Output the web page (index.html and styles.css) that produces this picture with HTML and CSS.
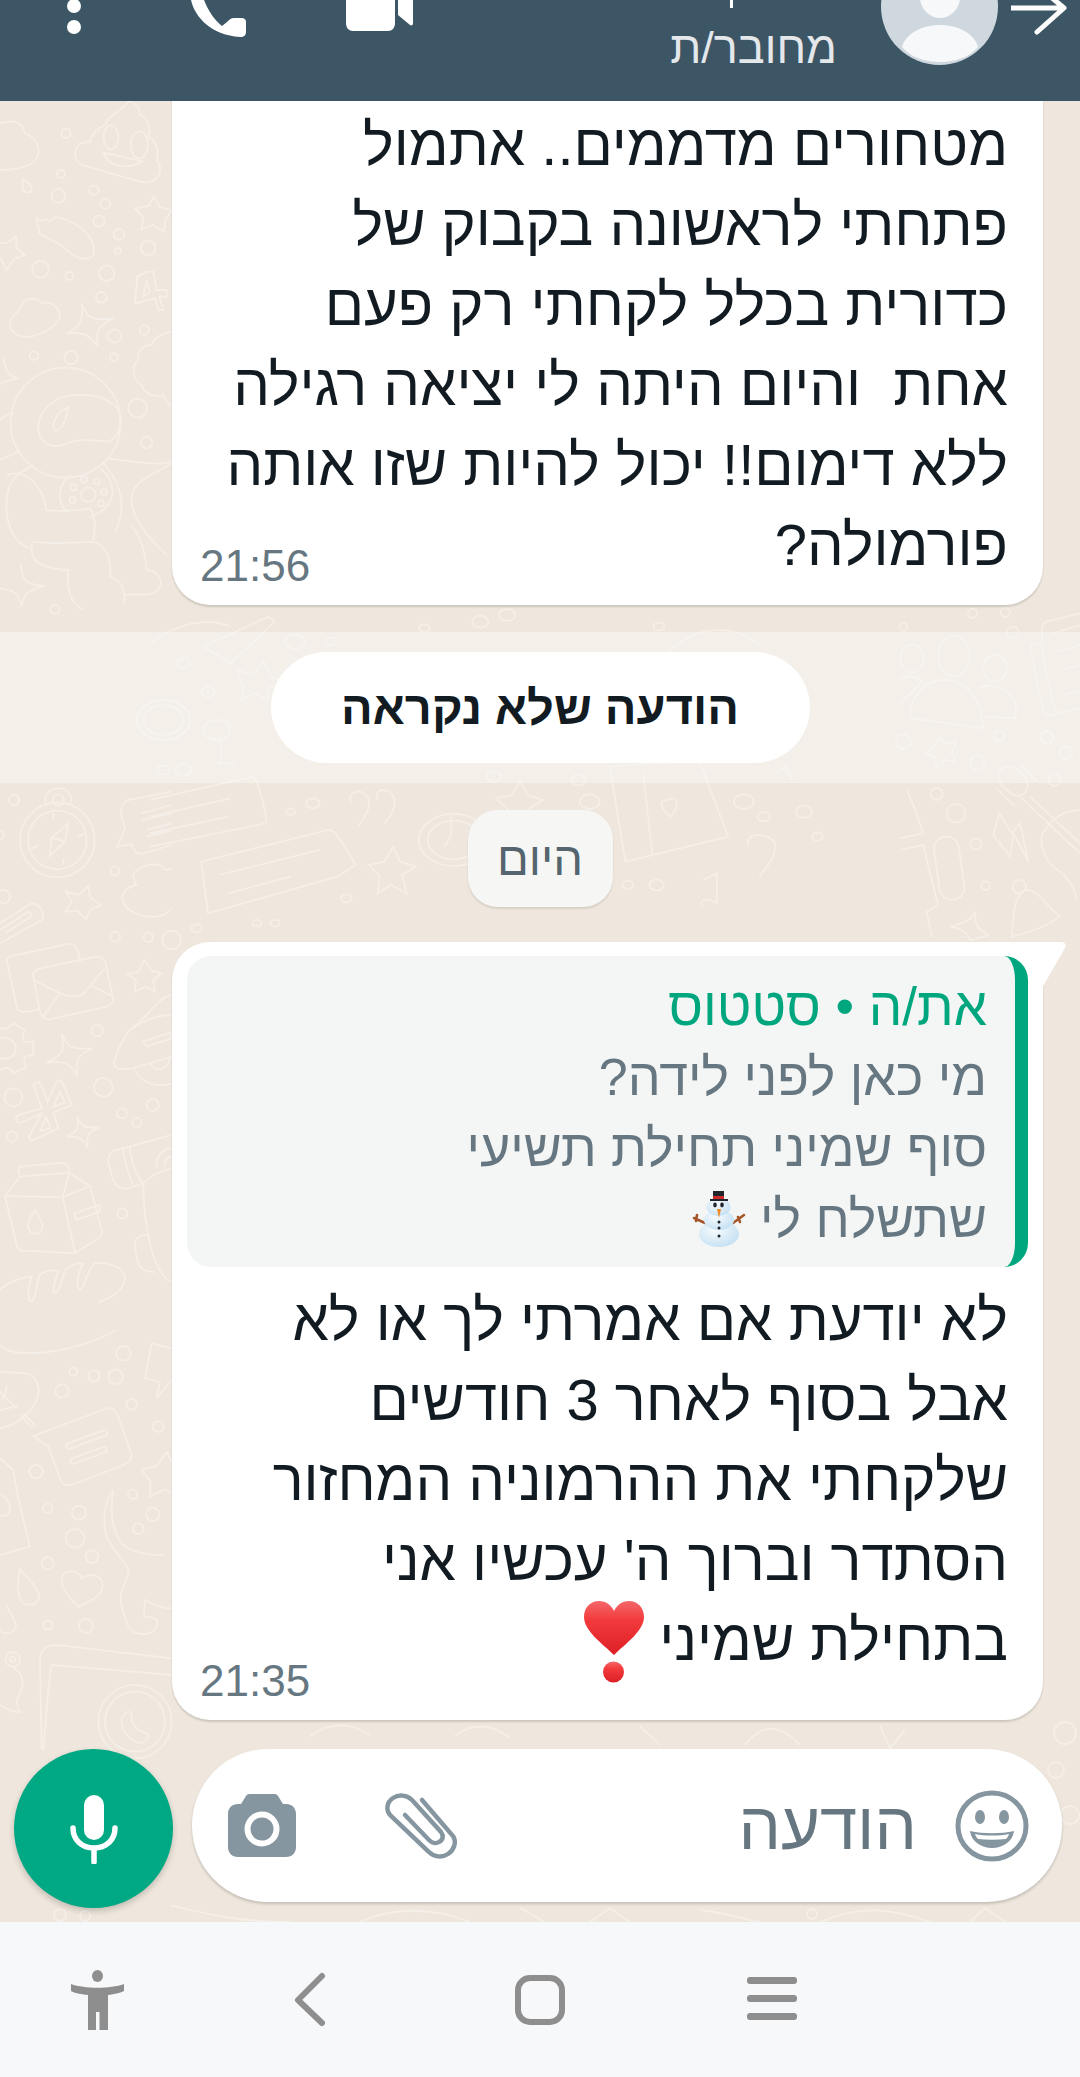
FILE: index.html
```html
<!DOCTYPE html>
<html lang="he">
<head>
  <meta charset="utf-8">
  <title>צ'אט</title>
  <link rel="stylesheet" href="styles.css">
</head>
<body>
  <header class="topbar">
    <svg class="ic-more" viewBox="67 0 14 34"><circle cx="74" cy="6" r="7"/><circle cx="74" cy="27" r="7"/></svg>
    <svg class="ic-phone" viewBox="191 0 55 37"><path d="M191 0C195 18 212 35 240 37C244 37 246 35 246 32V22C246 19 244 18 241 18H234C231 18 229 20 227 22L222 26C214 20 208 10 204 0Z"/></svg>
    <svg class="ic-video" viewBox="346 0 67 31"><path d="M346 0V23C346 28 349 31 353 31H388C392 31 395 28 395 23V0Z"/><path d="M398 0V15L410 25C412 26 413 25 413 23V0Z"/></svg>
    <div class="contact">
      <span class="contact-name"></span>
      <span class="contact-status" dir="rtl">מחובר/ת</span>
    </div>
    <svg class="avatar" viewBox="881 0 117 66">
      <circle cx="939.5" cy="6.5" r="58.5" fill="#cfd8df"/>
      <ellipse cx="940" cy="-3" rx="20" ry="21" fill="#f6f8f9"/>
      <path d="M902 47C905 35 920 25 940 25C960 25 975 35 978 47C970 57 955 62 940 62C925 62 910 57 902 47Z" fill="#f6f8f9"/>
    </svg>
    <svg class="ic-back" viewBox="1011 0 56 35"><path d="M1011 8H1063M1064 8L1037 32M1064 8L1045 -8"/></svg>
  </header>

  <main class="chat">
    <svg class="doodles" viewBox="0 101 1080 1821">
      <g transform="translate(0 100) scale(.3333)">
        <path d="M0 70C40 55 70 70 75 100C110 110 125 150 110 175C90 205 40 210 0 210"/>
        <path d="M240 130C220 150 220 180 245 195L420 245C470 255 495 215 470 180C480 150 465 120 445 110C455 85 440 50 420 45C420 20 400 5 385 5C370 30 330 40 315 75C290 85 270 110 272 125C262 128 250 128 240 130Z"/>
        <ellipse cx="333" cy="112" rx="22" ry="36"/><ellipse cx="418" cy="135" rx="26" ry="40"/>
        <path d="M310 157C340 165 390 175 425 183C400 205 330 210 310 157Z"/>
        <path d="M70 238C95 255 105 275 85 277C65 280 65 255 70 238Z"/>
        <path d="M0 430L20 428L48 410L50 445L75 465L45 475L20 510L5 480L0 475"/>
        <path d="M462 290L480 322L515 330L495 360L493 395L458 375L425 388L430 352L405 325L445 318Z"/>
        <path d="M110 355C130 375 140 345 150 365C165 345 170 350 200 360C250 380 290 420 280 465C260 490 220 470 200 450C170 420 120 410 115 395C125 385 105 370 110 355Z"/>
        <path d="M405 610L412 530L440 515L460 515L470 570L500 570L500 590L478 590L490 630L475 630L465 595ZM430 590L450 575L440 540Z"/>
        <path d="M245 610C260 650 270 665 340 655C290 680 285 700 295 740C270 710 260 695 200 700C240 680 250 665 245 610Z"/>
        <path d="M30 670C35 640 55 640 60 625C70 590 110 590 125 610C160 600 180 630 180 650C175 680 110 715 70 710C45 708 28 690 30 670Z"/>
        <path d="M515 695C480 700 460 720 455 735C425 735 410 760 415 780C395 795 395 840 425 855C430 880 470 895 490 885C500 910 510 915 515 920"/>
        <circle cx="197" cy="968" r="165"/>
        <path d="M115 990C110 930 170 880 240 885C300 885 340 900 360 940C365 990 350 1020 320 1025C270 1020 230 1015 190 1035C150 1045 120 1030 115 990Z"/>
        <path d="M160 975C165 950 180 930 205 922C200 950 190 985 170 992C160 990 158 985 160 975Z"/>
        <path d="M215 1125C170 1150 170 1220 205 1235M300 1105C350 1140 360 1220 270 1250"/>
        <circle cx="265" cy="1185" r="22"/><circle cx="220" cy="1162" r="9"/><circle cx="252" cy="1138" r="9"/><circle cx="290" cy="1144" r="9"/><circle cx="312" cy="1175" r="9"/><circle cx="303" cy="1210" r="9"/><circle cx="218" cy="1200" r="9"/>
        <path d="M100 1095C60 1120 25 1130 20 1200C15 1270 40 1330 90 1345M95 1325C130 1330 200 1330 280 1325C320 1340 335 1380 330 1430C370 1440 380 1490 370 1510"/>
        <path d="M135 1230C180 1235 220 1235 270 1225C290 1260 285 1290 280 1320M20 1125C60 1110 120 1130 140 1230M95 1330C90 1380 110 1405 205 1410C200 1450 205 1510 250 1530"/>
        <path d="M320 1075C380 1080 440 1095 490 1090L515 1085M305 1085C360 1140 385 1220 345 1295M390 1275C420 1300 435 1350 440 1410C490 1420 495 1460 460 1480C420 1490 390 1480 375 1485"/>
        <path d="M0 1080C20 1070 50 1060 60 1050M0 960C15 945 25 940 40 940M515 1090C470 1120 400 1140 395 1190C390 1240 430 1300 500 1365"/>
        <path d="M62 1390C65 1440 75 1455 135 1458C85 1470 70 1480 65 1520C55 1480 45 1470 0 1465M10 770C15 810 25 830 55 835C25 840 0 850 0 855"/>
        <circle cx="198" cy="100" r="14"/><circle cx="183" cy="222" r="12"/><circle cx="175" cy="288" r="21"/><circle cx="282" cy="271" r="14"/><circle cx="316" cy="311" r="15"/><circle cx="297" cy="363" r="17"/><circle cx="357" cy="403" r="16"/><circle cx="354" cy="453" r="9"/><circle cx="445" cy="444" r="22"/><circle cx="121" cy="508" r="25"/><circle cx="208" cy="528" r="12"/><circle cx="320" cy="520" r="23"/><circle cx="304" cy="592" r="16"/><circle cx="433" cy="690" r="14"/><circle cx="344" cy="708" r="20"/><circle cx="102" cy="767" r="13"/><circle cx="213" cy="773" r="20"/><circle cx="342" cy="772" r="12"/><circle cx="413" cy="925" r="28"/><circle cx="440" cy="1028" r="17"/><circle cx="165" cy="1528" r="14"/>
      </g>
      <g transform="translate(0 780) scale(.3333)">
        <circle cx="172" cy="180" r="112"/><circle cx="172" cy="180" r="88"/><circle cx="175" cy="60" r="17"/>
        <path d="M140 78C125 40 155 25 175 25C200 25 225 45 208 78M205 130L155 172L150 228L195 185ZM155 172L195 185M160 100V120M190 235V255M232 170L255 160M92 205L115 198"/>
        <path d="M515 35L385 60C365 65 360 90 365 110L375 145L352 200L395 192C400 210 410 225 430 220L515 195M425 100L515 75M425 120L515 100M440 150L515 130M440 170L515 152"/>
        <path d="M515 265C500 275 490 270 485 258C460 245 410 260 400 285C400 300 405 310 410 315C380 320 365 340 368 360C375 395 430 415 470 410C490 408 505 398 515 385"/>
        <path d="M265 318L270 352L303 375L272 388L258 418L232 392L195 395L215 365L198 335L235 345Z"/>
        <path d="M0 430L85 375C110 360 140 395 125 420L0 490M0 450L85 395C100 400 95 405 90 412L15 460"/>
        <path d="M20 540C25 530 40 525 50 525L205 492C225 490 235 505 240 545M20 540L50 680C55 700 70 700 120 687"/>
        <path d="M100 590C95 575 110 570 120 565L290 530C305 530 315 540 318 555L340 660C340 670 330 675 320 680L150 718C135 720 125 710 120 695ZM100 600L180 640C210 655 240 650 250 640L315 565M178 642L125 715M272 615L335 648"/>
        <path d="M433 540L455 572L485 580L460 600L465 635L435 620L405 635L408 600L382 582L415 575Z"/>
        <path d="M0 745C15 750 30 740 40 730L75 750C60 780 70 790 100 785L100 825C70 825 65 840 80 860L40 880C30 860 15 860 0 870"/><circle cx="15" cy="805" r="32"/>
        <path d="M185 760C200 800 215 810 278 805C235 825 225 835 232 888C210 850 200 840 140 848C190 825 195 810 185 760Z"/>
        <path d="M515 645C490 650 470 670 440 705L385 755C360 790 345 830 342 850C345 870 360 870 400 865L515 830M385 755C420 725 470 705 515 705M430 785L510 758L515 775L440 800ZM405 870C425 910 470 925 515 910M452 852C465 875 500 875 512 832"/>
        <path d="M100 915C110 900 120 905 125 920L143 965L170 905C180 895 185 905 190 915L215 975L160 998L175 1045L95 1082C85 1075 85 1070 90 1065L125 1000L60 1030C45 1025 45 1010 55 1005L125 985ZM180 935L195 968L160 980ZM138 1012L152 1045L120 1052Z"/>
        <path d="M232 1010C245 1040 255 1045 298 1042C265 1055 260 1065 262 1100C245 1075 240 1068 198 1070C235 1055 238 1045 232 1010Z"/>
        <path d="M515 1065L345 1112C325 1120 320 1140 330 1165C340 1215 355 1230 385 1225L430 1210C460 1180 490 1170 515 1165M368 1105C375 1150 385 1190 405 1222M388 1100C395 1145 410 1190 430 1210M430 1210C430 1270 435 1320 445 1365C450 1410 480 1500 515 1505M445 1365C415 1365 400 1380 405 1400C410 1450 420 1480 465 1475M470 1165C465 1130 490 1105 515 1105M495 1160C490 1140 505 1130 515 1130"/>
        <path d="M60 1160L190 1148C200 1148 205 1160 208 1178L60 1190C52 1175 55 1165 60 1160ZM60 1190L15 1248L188 1252L208 1178L270 1218L188 1252M15 1248L50 1395C52 1405 60 1412 75 1412L225 1420L188 1252M225 1420L295 1375C305 1368 307 1360 305 1350L270 1218M105 1290C85 1320 80 1335 85 1345C95 1370 125 1365 128 1340C125 1320 110 1300 105 1290ZM222 1300L298 1275L300 1295L228 1320Z"/>
        <path d="M0 1530C20 1505 60 1495 95 1490C85 1520 80 1555 92 1565C110 1560 110 1500 120 1485C135 1470 155 1470 175 1472C165 1500 155 1540 165 1540C185 1530 185 1480 200 1465C210 1455 230 1450 250 1450C235 1475 225 1520 240 1530C255 1520 265 1460 285 1450C320 1445 370 1460 375 1490C375 1530 340 1550 295 1568"/>
        <circle cx="345" cy="273" r="13"/><circle cx="345" cy="470" r="15"/><circle cx="445" cy="472" r="14"/><circle cx="515" cy="480" r="28"/><circle cx="42" cy="60" r="15"/><circle cx="10" cy="350" r="20"/><circle cx="0" cy="165" r="12"/><circle cx="292" cy="752" r="17"/><circle cx="310" cy="922" r="28"/><circle cx="40" cy="952" r="27"/><circle cx="365" cy="1000" r="15"/><circle cx="411" cy="1028" r="14"/><circle cx="458" cy="975" r="18"/><circle cx="35" cy="1070" r="15"/><circle cx="367" cy="1300" r="15"/>
      </g>
      <g transform="translate(0 1330) scale(.3333)">
        <path d="M0 45C30 85 200 80 350 0M455 40L515 55M455 40L435 145L480 155L470 205L515 150"/>
        <path d="M0 125L75 130C110 135 125 175 110 210C95 250 40 290 0 295M70 250L105 285L95 292L60 255M0 240C30 235 50 225 55 230M0 185L50 235M20 165C20 190 10 205 5 210"/>
        <path d="M100 318L320 235C340 230 350 245 355 260L395 375C395 395 380 400 370 405L215 465C195 470 185 460 180 445L145 350Z"/>
        <rect x="195" y="320" width="130" height="17" rx="8" transform="rotate(-20 260 328)"/><rect x="208" y="368" width="115" height="17" rx="8" transform="rotate(-20 265 376)"/>
        <path d="M500 365L515 395M500 365L470 408L425 420L452 455L450 500L495 478L515 490"/>
        <path d="M340 480C315 510 305 570 320 620C340 670 390 700 385 730C375 770 355 780 365 830C380 880 385 910 425 912C460 915 475 895 470 870C460 860 435 860 432 860L435 810C460 825 490 835 515 835M340 480C330 540 335 600 365 640C395 670 450 675 490 675"/>
        <path d="M60 718C100 760 125 790 115 810C100 830 65 830 58 800C50 770 55 740 60 718ZM18 825C35 855 55 885 45 895C35 915 5 915 0 895"/>
        <path d="M235 830C205 800 180 770 185 745C195 715 235 720 245 745C265 730 305 730 308 765C310 795 270 815 235 830Z"/>
        <path d="M0 385L40 420C50 500 75 590 90 650L0 675M0 490C25 510 35 530 28 545C20 560 10 560 0 555"/>
        <path d="M120 990C120 960 140 945 170 945L515 985M125 1260L120 990M155 1005L515 1035M155 1005C145 1060 135 1200 130 1260"/>
        <circle cx="405" cy="1175" r="110"/><circle cx="405" cy="1175" r="90"/>
        <path d="M365 1165C370 1150 385 1140 395 1150C390 1180 410 1200 440 1210C450 1220 440 1235 425 1240C390 1235 360 1200 365 1165Z"/>
        <circle cx="38" cy="988" r="22"/><circle cx="38" cy="988" r="8"/>
        <path d="M38 1010C70 1030 75 1060 60 1090C45 1110 50 1130 60 1145C40 1150 20 1135 0 1125"/>
        <circle cx="370" cy="70" r="22"/><circle cx="220" cy="125" r="12"/><circle cx="282" cy="138" r="17"/><circle cx="347" cy="140" r="22"/><circle cx="186" cy="183" r="20"/><circle cx="395" cy="223" r="16"/><circle cx="475" cy="290" r="16"/><circle cx="108" cy="425" r="20"/><circle cx="398" cy="493" r="14"/><circle cx="143" cy="535" r="14"/><circle cx="237" cy="548" r="21"/><circle cx="458" cy="553" r="20"/><circle cx="415" cy="596" r="16"/><circle cx="225" cy="625" r="28"/><circle cx="276" cy="680" r="19"/><circle cx="143" cy="700" r="18"/><circle cx="143" cy="885" r="14"/><circle cx="258" cy="888" r="21"/>
      </g>
      <g transform="translate(900 600) scale(.3333)">
        <ellipse cx="162" cy="168" rx="48" ry="60"/><ellipse cx="36" cy="175" rx="35" ry="42"/><ellipse cx="285" cy="205" rx="35" ry="40"/>
        <path d="M35 355C20 300 70 240 135 240C200 240 245 300 250 385ZM0 315C10 290 45 280 65 240C50 230 20 225 0 235M235 265C265 250 320 260 340 295C350 320 350 345 345 355L255 350"/>
        <path d="M118 410L135 430L168 425L155 460L168 485L135 480L110 505L105 470L75 460L105 440Z"/>
        <path d="M540 40L440 65C425 70 425 80 425 130L395 135C390 145 395 170 430 335C440 350 460 350 470 340L540 325M425 130C435 200 450 290 470 340M460 100L540 75M475 155L540 135M485 210L540 195M495 285L540 270"/>
        <path d="M300 510C320 490 350 495 380 540C390 570 370 595 340 585C310 565 285 545 300 510ZM360 590L540 760M390 590L540 730M290 565L345 620M360 490L410 545"/>
        <circle cx="358" cy="860" r="20"/>
        <path d="M335 1010C340 950 340 890 375 870C420 870 440 920 480 950C440 980 380 1000 335 1010Z"/>
        <rect x="110" y="710" width="75" height="190" rx="36" transform="rotate(-8 147 805)"/>
        <path d="M298 640L280 705L330 770L340 700L385 785L360 670L335 700ZM540 630C490 630 450 660 425 705C420 750 440 790 480 815C510 840 530 880 530 900M20 570C50 630 60 680 70 700L0 715M0 750L70 735C85 800 105 880 115 915L80 935L95 1010"/>
        <path d="M225 935C225 975 230 985 265 1005C245 1010 225 1020 210 1020C195 990 180 985 150 980C190 970 215 960 225 935Z"/>
        <circle cx="10" cy="80" r="12"/><circle cx="218" cy="40" r="14"/><circle cx="316" cy="37" r="14"/><circle cx="338" cy="98" r="18"/><circle cx="10" cy="425" r="22"/><circle cx="298" cy="408" r="16"/><circle cx="232" cy="488" r="22"/><circle cx="440" cy="412" r="19"/><circle cx="498" cy="458" r="19"/><circle cx="463" cy="540" r="18"/><circle cx="110" cy="582" r="18"/><circle cx="168" cy="640" r="28"/><circle cx="228" cy="732" r="17"/><circle cx="257" cy="857" r="13"/>
      </g>
      <g transform="translate(150 560) scale(.4464 .3333)">
        <path d="M0 720L230 650C240 650 265 780 260 790L0 860M0 770L180 715M0 820L175 770"/>
        <path d="M115 905L400 810C410 805 425 830 460 915L420 950L130 1060ZM155 945L380 870M175 1000L315 950"/>
        <path d="M545 860L560 905L595 920L565 945L575 1000L540 975L510 1000L515 950L490 915L525 905Z"/>
        <path d="M830 665L845 705L880 720L850 745L860 790L825 770L795 790L800 745L775 715L810 705Z"/>
        <circle cx="680" cy="840" r="78"/><circle cx="680" cy="840" r="58"/>
        <path d="M675 765V825L660 860M450 730C440 690 480 680 490 720C495 760 470 790 465 800M510 720C500 680 540 680 548 720C550 760 530 780 525 790M1340 860C1330 820 1380 810 1400 850C1405 890 1375 930 1365 950"/>
        <circle cx="30" cy="480" r="60"/><circle cx="30" cy="480" r="44"/>
        <path d="M195 330L230 345L255 305L270 350L300 365L265 385L265 420L235 400L205 420L210 385Z"/>
        <path d="M120 260L265 170L280 185L180 310Z"/>
        <circle cx="150" cy="510" r="30"/>
        <path d="M160 540V610M150 610H190M1030 620L1230 600L1295 830L1065 905ZM1105 640L1125 880M1160 720C1180 700 1190 740 1165 770C1140 740 1140 720 1160 720M1240 960L1270 940V1030M1240 1040C1225 1020 1250 1010 1270 1030"/>
        <circle cx="75" cy="310" r="15"/><circle cx="130" cy="395" r="15"/><circle cx="325" cy="245" r="22"/><circle cx="405" cy="245" r="12"/><circle cx="740" cy="185" r="18"/><circle cx="800" cy="165" r="18"/><circle cx="615" cy="205" r="12"/><circle cx="1140" cy="200" r="12"/><circle cx="30" cy="630" r="14"/><circle cx="75" cy="630" r="18"/><circle cx="315" cy="755" r="10"/><circle cx="365" cy="730" r="15"/><circle cx="770" cy="650" r="16"/><circle cx="960" cy="660" r="16"/><circle cx="985" cy="725" r="22"/><circle cx="1330" cy="725" r="22"/><circle cx="1375" cy="770" r="14"/><circle cx="1465" cy="755" r="18"/><circle cx="1495" cy="830" r="12"/><circle cx="440" cy="1015" r="12"/><circle cx="240" cy="1090" r="10"/><circle cx="280" cy="1090" r="10"/><circle cx="105" cy="1105" r="12"/><circle cx="1070" cy="975" r="12"/><circle cx="1135" cy="975" r="16"/>
        <path d="M0 250C60 190 130 170 180 200M1150 300C1200 200 1300 180 1370 260M1400 640L1425 620L1440 660"/>
      </g>
      <g class="doodles-low">
        <path d="M310 1736C330 1722 350 1722 370 1735M455 1736C470 1724 490 1722 510 1738M640 1726L660 1745M745 1745C760 1725 780 1722 800 1745M880 1726L890 1748L905 1730"/>
        <path d="M170 1905C210 1915 240 1922 290 1922M360 1922C390 1908 430 1906 470 1922M520 1908L545 1922M590 1922L610 1908L630 1922M700 1910C720 1912 740 1918 760 1922M820 1922C860 1905 890 1908 930 1922M970 1922L985 1908L1005 1922"/>
        <circle cx="60" cy="1915" r="6"/><circle cx="85" cy="1916" r="5"/><circle cx="812" cy="1914" r="5"/><circle cx="1065" cy="1733" r="11"/><circle cx="1056" cy="1770" r="8"/><circle cx="1070" cy="1815" r="9"/>
      </g>
    </svg>

    <article class="bubble bubble-first">
      <div class="msg-text">מטחורים מדממים.. אתמול<br>פתחתי לראשונה בקבוק של<br>כדורית בכלל לקחתי רק פעם<br>אחת &nbsp;והיום היתה לי יציאה רגילה<br>ללא דימום!! יכול להיות שזו אותה</div>
      <div class="msg-foot">
        <span class="msg-text">פורמולה?</span>
        <time class="msg-time">21:56</time>
      </div>
    </article>

    <div class="unread"><span class="unread-pill">הודעה שלא נקראה</span></div>

    <div class="day"><span class="day-pill">היום</span></div>

    <article class="bubble bubble-tail">
      <svg class="tail" viewBox="0 0 24 46"><path d="M0 0H19C23 0 25 3 23 6L0 46Z"/></svg>
      <div class="quote">
        <div class="quote-who">את/ה • סטטוס</div>
        <div class="quote-body">מי כאן לפני לידה?<br>סוף שמיני תחילת תשיעי<br>שתשלח לי
          <svg class="snowman" viewBox="0 0 54 56">
            <defs>
              <radialGradient id="snowFill" cx=".4" cy=".35" r=".8"><stop offset="0" stop-color="#f7fbfe"/><stop offset="1" stop-color="#bcdcf1"/></radialGradient>
            </defs>
            <path d="M2 27L13 32M52 24L41 32M5 24L4 30M48 31L46 26" stroke="#a5562a" stroke-width="2.6" stroke-linecap="round" fill="none"/>
            <ellipse cx="27" cy="43" rx="20" ry="13" fill="url(#snowFill)"/>
            <ellipse cx="27" cy="29" rx="15" ry="10" fill="url(#snowFill)"/>
            <ellipse cx="26.5" cy="16" rx="12" ry="9" fill="url(#snowFill)"/>
            <path d="M21 0H32V8H36V10H18V8H21Z" fill="#22262b"/>
            <rect x="21" y="5" width="11" height="3" fill="#cf2a27"/>
            <ellipse cx="23" cy="14" rx="1.8" ry="2.4" fill="#22262b"/>
            <ellipse cx="30" cy="14" rx="1.8" ry="2.4" fill="#22262b"/>
            <path d="M25 18H29L27 27Z" fill="#f08a24"/>
            <circle cx="27" cy="31" r="1.5" fill="#22262b"/><circle cx="27" cy="37" r="1.5" fill="#22262b"/><circle cx="27" cy="45" r="1.5" fill="#22262b"/>
          </svg>
        </div>
      </div>
      <div class="msg-text">לא יודעת אם אמרתי לך או לא<br>אבל בסוף לאחר 3 חודשים<br>שלקחתי את ההרמוניה המחזור<br>הסתדר וברוך ה' עכשיו אני</div>
      <div class="msg-foot">
        <span class="msg-text">בתחילת שמיני
          <svg class="heart" viewBox="0 0 62 82">
            <defs>
              <linearGradient id="heartFill" x1="0" y1="0" x2="0" y2="1"><stop offset="0" stop-color="#f4686a"/><stop offset=".35" stop-color="#f23a3c"/><stop offset="1" stop-color="#dd1f26"/></linearGradient>
            </defs>
            <path d="M31 54C20 43 1 30 1 16C1 6 8 0 16 0C23 0 28 4 31 10C34 4 39 0 46 0C54 0 61 6 61 16C61 30 42 43 31 54Z" fill="url(#heartFill)"/>
            <circle cx="30.5" cy="71" r="10.5" fill="url(#heartFill)"/>
          </svg>
        </span>
        <time class="msg-time">21:35</time>
      </div>
    </article>

    <div class="composer">
      <button class="mic" type="button">
        <svg viewBox="0 0 48 70"><rect x="14" y="1" width="20" height="45" rx="10" fill="#fff"/><path d="M3 34C3 46 12 54 24 54C36 54 45 46 45 34M24 54V68" stroke="#fff" stroke-width="5.5" stroke-linecap="round" fill="none"/></svg>
      </button>
      <div class="input">
        <svg class="ic-camera" viewBox="227 1794 68 63">
          <path d="M240 1804L245 1796C246 1794 248 1794 250 1794H272C274 1794 276 1794 277 1796L282 1804H285C291 1804 295 1808 295 1814V1847C295 1853 291 1857 285 1857H237C231 1857 227 1853 227 1847V1814C227 1808 231 1804 237 1804Z" fill="#8696a0"/>
          <circle cx="261" cy="1829" r="14.5" fill="none" stroke="#fff" stroke-width="6"/>
        </svg>
        <svg class="ic-clip" viewBox="382 1792 76 68">
          <path d="M421 1800L452 1836C456 1842 453 1850 447 1854C441 1858 433 1857 428 1852L390 1816C384 1810 386 1802 392 1798C398 1794 406 1795 411 1800L440 1832C443 1836 442 1840 438 1842C435 1844 431 1843 428 1840L404 1815" fill="none" stroke="#8696a0" stroke-width="4.5" stroke-linecap="round"/>
        </svg>
        <span class="placeholder" dir="rtl">הודעה</span>
        <svg class="ic-smile" viewBox="0 0 74 72">
          <ellipse cx="37" cy="36" rx="34" ry="33" fill="none" stroke="#8696a0" stroke-width="5"/>
          <ellipse cx="25" cy="27" rx="5" ry="7" fill="#8696a0"/>
          <ellipse cx="49" cy="27" rx="5" ry="7" fill="#8696a0"/>
          <path d="M15 41C28 44 46 44 59 41C58 51 48 58 37 58C26 58 16 51 15 41Z" fill="#8696a0"/>
          <path d="M20 44C30 46 44 46 54 44C53 47 52 48 51 49C42 50 32 50 23 49C22 48 21 47 20 44Z" fill="#fff"/>
        </svg>
      </div>
    </div>
  </main>

  <nav class="navbar">
    <svg class="nav-access" viewBox="71 1969 53 60"><ellipse cx="97.5" cy="1975" rx="5.5" ry="6"/><path d="M71 1983C85 1988 110 1988 124 1983V1990C118 1993 113 1993 108 1994V2029H99.5V2011H96V2029H88V1994C82 1993 76 1993 71 1990Z"/></svg>
    <svg class="nav-back" viewBox="293 1971 34 57"><path d="M322 1976L298 2000L322 2023"/></svg>
    <svg class="nav-home" viewBox="515 1975 50 50"><rect x="518" y="1978" width="44" height="44" rx="12"/></svg>
    <svg class="nav-menu" viewBox="747 1978 50 46"><rect x="747" y="1978" width="50" height="7" rx="3"/><rect x="747" y="1996" width="50" height="7" rx="3"/><rect x="747" y="2014" width="50" height="7" rx="3"/></svg>
  </nav>
</body>
</html>
```

FILE: styles.css
```css
* {
  box-sizing: border-box;
}

html, body {
  margin: 0;
  height: 2077px;
  overflow: hidden;
}

body {
  width: 1080px;
  display: flex;
  flex-direction: column;
  font-family: "Liberation Sans", "Noto Sans", sans-serif;
  color: #111b21;
}

/* top bar, the screenshot cuts its upper part off */
.topbar {
  height: 101px;
  flex: none;
  display: flex;
  align-items: flex-start;
  background-color: #3d5665;
  overflow: hidden;
}
.topbar svg {
  flex: none;
  fill: #fff;
}
.ic-more {
  width: 14px;
  height: 34px;
  margin-left: 67px;
}
.ic-phone {
  width: 55px;
  height: 37px;
  margin-left: 110px;
}
.ic-video {
  width: 67px;
  height: 31px;
  margin-left: 100px;
}
.contact {
  width: 468px;
  display: flex;
  flex-direction: column;
  align-items: flex-end;
  padding-right: 44px;
}
.contact-name {
  width: 3px;
  height: 8px;
  margin-right: 104px;
  background-color: #fff;
}
.contact-status {
  margin-top: 15px;
  font-size: 45px;
  line-height: 50px;
  color: #e4e8eb;
}
.avatar {
  width: 117px;
  height: 66px;
}
.ic-back {
  width: 56px;
  height: 35px;
  margin-left: 13px;
}
.ic-back path {
  fill: none;
  stroke: #fff;
  stroke-width: 5;
  stroke-linecap: round;
}

/* chat area */
.chat {
  flex: 1;
  position: relative;
  display: flex;
  flex-direction: column;
  justify-content: flex-end;
  background-color: #efe7dd;
  overflow: hidden;
}
.doodles {
  position: absolute;
  top: 0;
  left: 0;
  width: 1080px;
  height: 1821px;
  fill: none;
  stroke: #f4efe9;
  stroke-width: 1.8;
}
.doodles * {
  vector-effect: non-scaling-stroke;
}

.bubble {
  position: relative;
  width: 871px;
  margin-left: 172px;
  background-color: #fff;
  border-radius: 38px;
  box-shadow: 0 2px 2px rgba(0, 0, 0, .14);
  direction: rtl;
}
.bubble-first {
  flex: none;
  padding: 10px 35px 0 28px;
  border-radius: 0 0 38px 38px;
}
.bubble-tail {
  flex: none;
  display: flex;
  flex-direction: column;
  padding: 14px 15px 0 15px;
  height: 778px;
  border-top-right-radius: 0;
}
.tail {
  position: absolute;
  top: 0;
  right: -23px;
  width: 24px;
  height: 46px;
  fill: #fff;
}
.msg-text {
  font-size: 58px;
  line-height: 80px;
  color: #111b21;
}
.bubble-tail > .msg-text {
  padding-right: 20px;
}
.msg-foot {
  display: flex;
  justify-content: space-between;
  height: 100px;
}
.bubble-tail > .msg-foot {
  flex: 1;
  padding: 0 20px 0 13px;
}
.msg-time {
  align-self: flex-end;
  margin-bottom: 17px;
  font-size: 44px;
  line-height: 44px;
  color: #667781;
}
.heart {
  width: 62px;
  height: 82px;
  margin: -26px -2px -20px 0;
  vertical-align: middle;
}

.quote {
  flex: none;
  height: 311px;
  margin-bottom: 13px;
  padding: 15px 28px 0 0;
  background-color: #f4f6f6;
  border-radius: 24px;
  border-right: 13px solid #00a67e;
  font-size: 52px;
  line-height: 71px;
}
.quote-who {
  color: #00a67e;
  font-size: 53px;
}
.quote-body {
  color: #667781;
}
.snowman {
  width: 54px;
  height: 56px;
  margin: -18px 0 -10px 0;
  vertical-align: middle;
}

.unread {
  flex: none;
  margin-top: 27px;
  padding: 20px 0;
  display: flex;
  justify-content: center;
  background-color: rgba(255, 255, 255, .32);
  position: relative;
}
.unread-pill {
  width: 539px;
  height: 111px;
  border-radius: 56px;
  background-color: #fff;
  font-size: 47px;
  font-weight: bold;
  line-height: 111px;
  text-align: center;
  color: #111b21;
}
.day {
  flex: none;
  margin: 27px 0 35px;
  display: flex;
  justify-content: center;
  position: relative;
}
.day-pill {
  width: 145px;
  height: 97px;
  border-radius: 30px;
  background-color: #f6f6f4;
  box-shadow: 0 2px 2px rgba(0, 0, 0, .1);
  font-size: 47px;
  line-height: 97px;
  text-align: center;
  color: #54656f;
}

/* input row */
.composer {
  flex: none;
  position: relative;
  height: 202px;
  padding: 29px 18px 0 14px;
  display: flex;
  align-items: flex-start;
  gap: 19px;
}
.mic {
  width: 159px;
  height: 159px;
  flex: none;
  display: flex;
  align-items: center;
  justify-content: center;
  border: none;
  border-radius: 50%;
  background-color: #00a884;
  box-shadow: 0 3px 6px rgba(0, 0, 0, .2);
}
.mic svg {
  width: 48px;
  height: 70px;
}
.input {
  flex: 1;
  height: 153px;
  display: flex;
  align-items: center;
  padding: 0 33px 0 36px;
  background-color: #fff;
  border-radius: 76px;
  box-shadow: 0 2px 3px rgba(0, 0, 0, .18);
}
.ic-camera {
  width: 68px;
  height: 63px;
}
.ic-clip {
  width: 76px;
  height: 68px;
  margin-left: 87px;
}
.placeholder {
  margin-left: auto;
  margin-right: 38px;
  font-size: 67px;
  color: #667781;
}
.ic-smile {
  width: 74px;
  height: 72px;
}

/* android nav */
.navbar {
  height: 155px;
  flex: none;
  display: flex;
  align-items: center;
  padding-left: 71px;
  background-color: #f6f8fa;
}
.nav-access, .nav-menu {
  fill: #8e8e8e;
}
.nav-access {
  width: 53px;
  height: 60px;
}
.nav-back {
  width: 34px;
  height: 57px;
  margin-left: 169px;
  fill: none;
  stroke: #8e8e8e;
  stroke-width: 6;
  stroke-linecap: round;
  stroke-linejoin: round;
}
.nav-home {
  width: 50px;
  height: 50px;
  margin-left: 188px;
  fill: none;
  stroke: #8e8e8e;
  stroke-width: 6;
}
.nav-menu {
  width: 50px;
  height: 46px;
  margin-left: 182px;
}
```
